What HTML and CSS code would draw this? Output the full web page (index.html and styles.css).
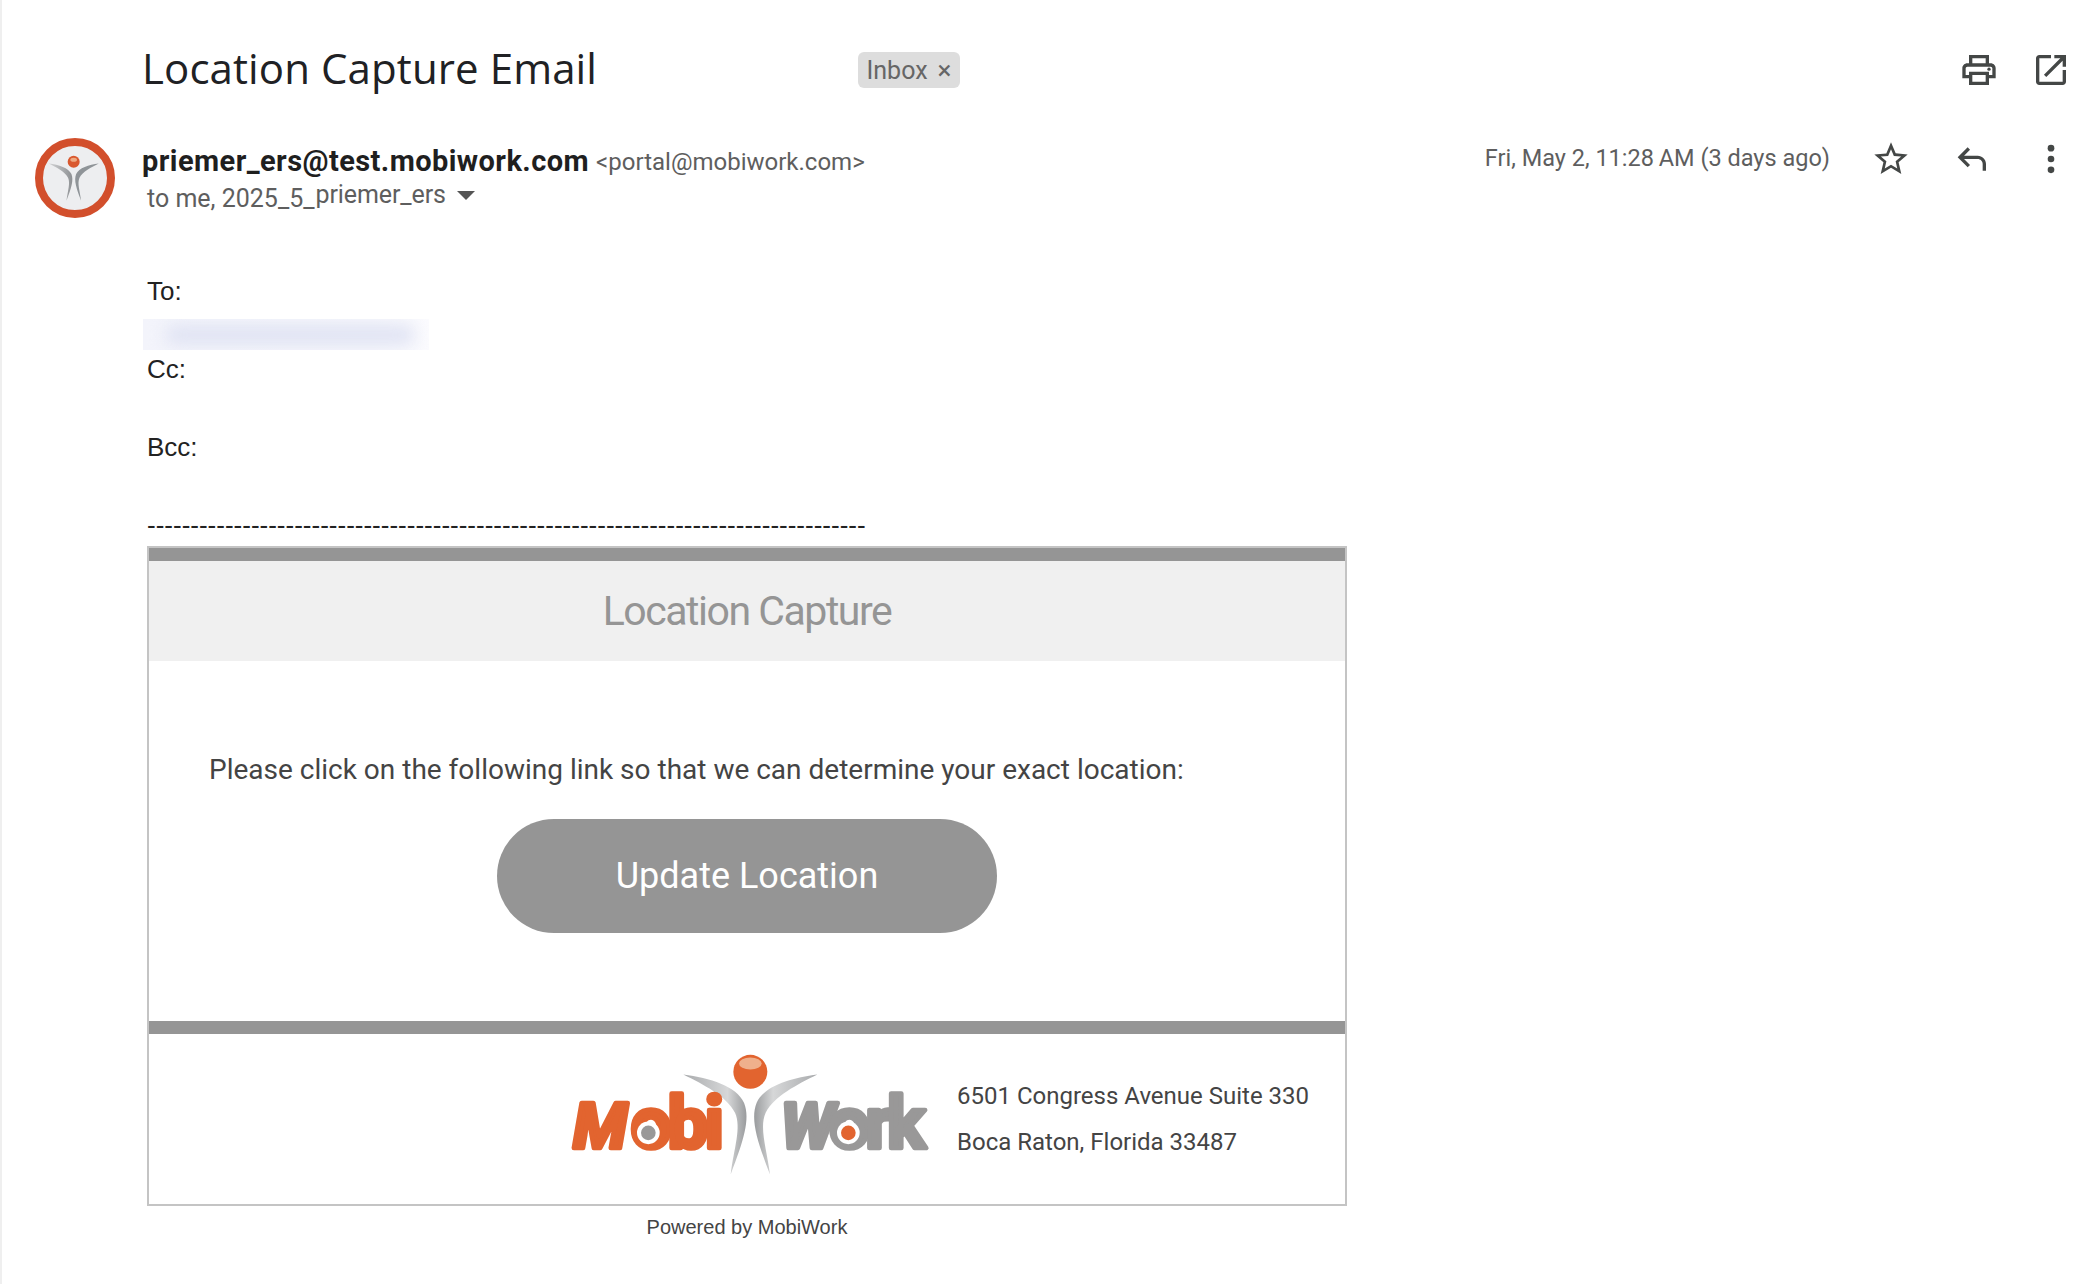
FILE: index.html
```html
<!DOCTYPE html>
<html lang="en">
<head>
    <meta charset="UTF-8">
    <title>Location Capture Email</title>
    <link rel="stylesheet" href="styles.css">
</head>
<body>
    <main class="mail">
        <header class="subject-row">
            <h1 class="subject">Location Capture Email</h1>
            <span class="label">Inbox <span class="label-x">&times;</span></span>
            <div class="top-actions">
                <svg class="icon-print" viewBox="0 0 24 24" width="40" height="40"><path d="M19 8h-1V3H6v5H5c-1.66 0-3 1.34-3 3v6h4v4h12v-4h4v-6c0-1.66-1.34-3-3-3zM8 5h8v3H8V5zm8 14H8v-4h8v4zm2-4v-2H6v2H4v-4c0-.55.45-1 1-1h14c.55 0 1 .45 1 1v4h-2z"/><circle cx="18" cy="11.5" r="1"/></svg>
                <svg class="icon-open" viewBox="0 0 24 24" width="40" height="40"><path d="M19 19H5V5h7V3H5c-1.1 0-2 .9-2 2v14c0 1.1.9 2 2 2h14c1.1 0 2-.9 2-2v-7h-2v7zM14 3v2h3.59l-9.83 9.83 1.41 1.41L19 6.41V10h2V3h-7z"/></svg>
            </div>
        </header>

        <section class="sender-row">
            <svg class="avatar" viewBox="48 54 240 240" width="80" height="80">
                <defs>
                    <linearGradient id="limb" x1="0" y1="0" x2="1" y2="0">
                        <stop offset="0" stop-color="#d3d4d6"/>
                        <stop offset="1" stop-color="#8d9093"/>
                    </linearGradient>
                </defs>
                <circle cx="168" cy="174" r="108" fill="#edeef0" stroke="#d24f2c" stroke-width="24"/>
                <circle cx="164" cy="125" r="18" fill="#d9592f"/>
                <ellipse cx="164" cy="119" rx="10" ry="6" fill="#eea981"/>
                <g transform="translate(-71 82) scale(0.373)">
                    <path d="M430 130C510 140 590 165 612 215C632 265 610 330 572 430C582 350 605 290 585 245C560 195 490 160 430 130Z" fill="url(#limb)"/>
                    <path d="M832 130C752 140 672 165 650 215C630 265 652 330 690 430C680 350 657 290 677 245C702 195 772 160 832 130Z" fill="#8f9498"/>
                </g>
            </svg>
            <div class="sender-info">
                <div class="sender-line">
                    <span class="sender-name">priemer_ers@test.mobiwork.com</span>
                    <span class="sender-mail">&lt;portal@mobiwork.com&gt;</span>
                </div>
                <div class="to-line">
                    <span class="to-me">to me, 2025_5_</span><span class="to-name">priemer_ers</span>
                    <span class="caret"></span>
                </div>
            </div>
            <div class="mail-meta">
                <span class="mail-date">Fri, May 2, 11:28&#8201;AM (3 days ago)</span>
                <svg class="icon-star" viewBox="0 0 24 24" width="40" height="40"><path d="M22 9.24l-7.19-.62L12 2 9.19 8.63 2 9.24l5.46 4.73L5.82 21 12 17.27 18.18 21l-1.63-7.03L22 9.24zM12 15.4l-3.76 2.27 1-4.28-3.32-2.88 4.38-.38L12 6.1l1.71 4.04 4.38.38-3.32 2.88 1 4.28L12 15.4z"/></svg>
                <svg class="icon-reply" viewBox="0 0 24 24" width="40" height="40"><path d="M21 19h-2v-4c0-1.66-1.34-3-3-3H7.83l3.58 3.59L10 17l-6-6 6-6 1.41 1.41L7.83 10H16c2.76 0 5 2.24 5 5v4z"/></svg>
                <svg class="icon-more" viewBox="0 0 24 24" width="40" height="40"><circle cx="12" cy="5.5" r="2"/><circle cx="12" cy="12" r="2"/><circle cx="12" cy="18.5" r="2"/></svg>
            </div>
        </section>

        <section class="mail-body">
            <p class="head-line to-label">To:</p>
            <div class="blurred"><span class="blurred-inner"></span></div>
            <p class="head-line">Cc:</p>
            <p class="head-line spaced">Bcc:</p>
            <p class="head-line spaced dashes">-----------------------------------------------------------------------------------</p>

            <div class="card">
                <div class="card-bar"></div>
                <div class="card-title">Location Capture</div>
                <div class="card-content">
                    <p class="card-text">Please click on the following link so that we can determine your exact location:</p>
                    <a class="update-btn">Update Location</a>
                </div>
                <div class="card-bar"></div>
                <div class="card-footer">
                    <svg class="logo" viewBox="90 60 1080 380" width="360" height="127">
                        <defs>
                            <linearGradient id="arm-left" x1="0" y1="0" x2="1" y2="0">
                                <stop offset="0" stop-color="#a9abad"/>
                                <stop offset="0.7" stop-color="#d6d7d8"/>
                                <stop offset="1" stop-color="#999b9d"/>
                            </linearGradient>
                            <linearGradient id="arm-right" x1="1" y1="0" x2="0" y2="0">
                                <stop offset="0" stop-color="#a9abad"/>
                                <stop offset="0.7" stop-color="#d6d7d8"/>
                                <stop offset="1" stop-color="#999b9d"/>
                            </linearGradient>
                        </defs>
                        <path d="M430 130C510 140 590 165 612 215C632 265 610 330 572 430C582 350 605 290 585 245C560 195 490 160 430 130Z" fill="url(#arm-left)"/>
                        <path d="M832 130C752 140 672 165 650 215C630 265 652 330 690 430C680 350 657 290 677 245C702 195 772 160 832 130Z" fill="url(#arm-right)"/>
                        <circle cx="631" cy="122" r="51" fill="#e2642f"/>
                        <ellipse cx="631" cy="97" rx="34" ry="18" fill="#efb08c"/>

                        <text class="logo-text logo-orange slant" x="100" y="352">M</text>
                        <text class="logo-text logo-orange tight" x="272" y="352">obi</text>
                        <circle cx="325" cy="305" r="34" fill="#fff"/>
                        <circle cx="325" cy="305" r="22" fill="#999898"/>

                        <text class="logo-text logo-grey slant" x="722" y="352">W</text>
                        <text class="logo-text logo-grey tighter" x="868" y="352">ork</text>
                        <circle cx="925" cy="305" r="34" fill="#fff"/>
                        <circle cx="925" cy="305" r="22" fill="#e2642f"/>
                    </svg>
                    <div class="address">
                        <div>6501 Congress Avenue Suite 330</div>
                        <div>Boca Raton, Florida 33487</div>
                    </div>
                </div>
            </div>
            <div class="powered">Powered by MobiWork</div>
        </section>
    </main>
</body>
</html>
```

FILE: styles.css
```css
html, body {
    margin: 0;
    padding: 0;
    background: #fff;
}

body {
    font-family: Roboto, "Liberation Sans", sans-serif;
    color: #222;
}

.mail {
    width: 2092px;
    height: 1284px;
    box-sizing: border-box;
    border-left: 2px solid #efefef;
    overflow: hidden;
}

/* subject */
.subject-row {
    display: flex;
    align-items: center;
    height: 66px;
    margin-top: 37px;
    padding-left: 140px;
    padding-right: 21px;
}

.subject {
    margin: -6px 0 0;
    width: 716px;
    font-family: "Open Sans", sans-serif;
    font-size: 42px;
    font-weight: 400;
    letter-spacing: 0.1px;
    color: #202124;
}

.label {
    display: flex;
    align-items: center;
    justify-content: center;
    width: 102px;
    height: 36px;
    gap: 10px;
    border-radius: 6px;
    background: #dddddd;
    color: #666;
    font-size: 25px;
}

.label-x {
    font-size: 26px;
}

.top-actions {
    display: flex;
    gap: 32px;
    margin-left: auto;
}

.top-actions svg, .mail-meta svg {
    fill: #444746;
    flex: none;
}

/* sender */
.sender-row {
    display: flex;
    align-items: flex-start;
    margin-top: 34px;
    padding-left: 33px;
    padding-right: 21px;
}

.avatar {
    flex: none;
    margin-top: 1px;
    margin-right: 27px;
}

.sender-info {
    padding-top: 7px;
}

.sender-line {
    display: flex;
    align-items: baseline;
    gap: 7px;
}

.sender-name {
    font-size: 29px;
    font-weight: 700;
    letter-spacing: 0.43px;
    color: #1f1f1f;
}

.sender-mail {
    position: relative;
    top: -1px;
    font-size: 24px;
    color: #5e5e5e;
}

.to-line {
    display: flex;
    align-items: center;
    margin-top: 2px;
    padding-left: 5px;
    font-size: 25px;
    color: #5e5e5e;
}

.to-me {
    padding-top: 4px;
}

.to-name {
    margin-top: -4px;
    margin-left: 1px;
    letter-spacing: -0.1px;
}

.caret {
    width: 0;
    height: 0;
    margin-left: 11px;
    margin-top: -3px;
    border-left: 9px solid transparent;
    border-right: 9px solid transparent;
    border-top: 9px solid #555;
}

.mail-meta {
    display: flex;
    align-items: center;
    margin-left: auto;
    padding-top: 2px;
}

.mail-date {
    margin-top: -3px;
    margin-right: 41px;
    font-size: 23.5px;
    color: #5e5e5e;
}

.icon-reply, .icon-more {
    margin-left: 40px;
}

/* body */
.mail-body {
    margin-top: 54px;
    padding-left: 145px;
}

.head-line {
    margin: 0;
    height: 39px;
    line-height: 39px;
    font-family: "Liberation Sans", sans-serif;
    font-size: 26px;
    color: #222;
}

.to-label {
    margin-bottom: 8px;
}

.spaced {
    margin-top: 39px;
}

.dashes {
    white-space: nowrap;
}

.blurred {
    width: 286px;
    height: 31px;
    margin-left: -4px;
    overflow: hidden;
    background: linear-gradient(to right, #f3f4fb, #f6f7fc 80%, #fbfbfe);
}

.blurred-inner {
    display: block;
    width: 250px;
    height: 20px;
    margin: 6px 0 0 22px;
    border-radius: 10px;
    background: #e0e3f3;
    filter: blur(8px);
}

/* card */
.card {
    width: 1200px;
    box-sizing: border-box;
    margin-top: 1px;
    border: 2px solid #c4c4c4;
}

.card-bar {
    height: 13px;
    background: #959595;
}

.card-title {
    height: 100px;
    line-height: 100px;
    background: #f0f0f0;
    text-align: center;
    font-size: 41px;
    letter-spacing: -1.47px;
    color: #959595;
}

.card-content {
    display: flex;
    flex-direction: column;
    align-items: center;
    height: 360px;
    padding-top: 92px;
    box-sizing: border-box;
}

.card-text {
    margin: 0 0 32px;
    width: 100%;
    padding-left: 60px;
    box-sizing: border-box;
    font-size: 28px;
    line-height: 34px;
    color: #444;
}

.update-btn {
    display: block;
    width: 500px;
    height: 114px;
    line-height: 114px;
    border-radius: 57px;
    background: #959595;
    text-align: center;
    font-size: 36px;
    color: #fff;
}

.card-footer {
    display: flex;
    align-items: center;
    height: 170px;
    padding-left: 421px;
    gap: 27px;
}

.logo {
    flex: none;
    margin-bottom: 10px;
}

.logo-text {
    font-family: Roboto, sans-serif;
    font-size: 215px;
    font-weight: 700;
    stroke-width: 14px;
    stroke-linejoin: round;
}

.slant {
    font-size: 190px;
    font-style: italic;
}

.tight {
    letter-spacing: -10px;
}

.tighter {
    letter-spacing: -13px;
}

.logo-orange {
    fill: #e2642f;
    stroke: #e2642f;
}

.logo-grey {
    fill: #999898;
    stroke: #999898;
}

.address {
    font-size: 24px;
    line-height: 46px;
    color: #444;
}

.powered {
    width: 1200px;
    margin-top: 10px;
    text-align: center;
    font-family: "Liberation Sans", sans-serif;
    font-size: 20px;
    color: #444;
}
```
